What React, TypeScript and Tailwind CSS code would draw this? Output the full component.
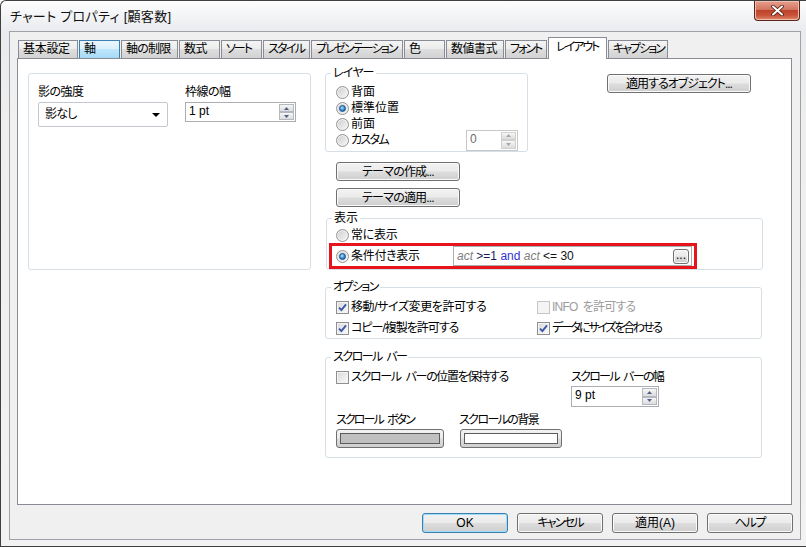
import React from "react";

const font =
  "font-['Liberation_Sans','Noto_Sans_CJK_JP',sans-serif] [font-feature-settings:'palt']";

const btnBg =
  "bg-[linear-gradient(#f2f2f2,#ebebeb_48%,#dddddd_52%,#cfcfcf)]";

// en space keeps the gap visible under tight tracking
const sp = "\u2002";

const tabs = [
  { label: "基本設定", w: "w-[60px]", tr: "tracking-[-0.3px]" },
  { label: "軸", w: "w-[41px]", tr: "", hover: true },
  { label: "軸の制限", w: "w-[57px]", tr: "tracking-[-0.8px]" },
  { label: "数式", w: "w-[41px]", tr: "tracking-[-0.5px]" },
  { label: "ソート", w: "w-[41px]", tr: "tracking-[-2px]" },
  { label: "スタイル", w: "w-[47px]", tr: "tracking-[-1.7px]" },
  { label: "プレゼンテーション", w: "w-[92px]", tr: "tracking-[-1.8px]" },
  { label: "色", w: "w-[41px]", tr: "" },
  { label: "数値書式", w: "w-[58px]", tr: "tracking-[-0.5px]" },
  { label: "フォント", w: "w-[42px]", tr: "tracking-[-2px]" },
  { label: "レイアウト", w: "w-[59px]", tr: "tracking-[-2px]", active: true },
  { label: "キャプション", w: "w-[60px]", tr: "tracking-[-2px]" },
];

function Btn({
  children,
  className = "",
  def = false,
}: {
  children: React.ReactNode;
  className?: string;
  def?: boolean;
}) {
  return (
    <div
      className={`flex items-center justify-center rounded-[3px] border ${
        def
          ? "border-[#3c7fb1] shadow-[inset_0_0_0_1px_#9fdcf8]"
          : "border-[#707070] shadow-[inset_0_0_0_1px_#fafafa]"
      } ${btnBg} text-[12px] leading-none text-black ${className}`}
    >
      {children}
    </div>
  );
}

function Radio({
  checked = false,
  label,
  tc = "",
  h = "h-[15px]",
}: {
  checked?: boolean;
  label: string;
  tc?: string;
  h?: string;
}) {
  return (
    <div className={`flex ${h} items-center gap-[2px]`}>
      <span className="flex h-[13px] w-[13px] items-center justify-center rounded-full border border-[#939393] bg-[linear-gradient(135deg,#cdcdcd,#f8f8f8)] shadow-[inset_0_0_0_1px_#f2f2f2]">
        {checked && (
          <span className="h-[7px] w-[7px] rounded-full border border-[#184d88] bg-[radial-gradient(circle_at_40%_35%,#a8e4ff,#1b74c9_70%)]" />
        )}
      </span>
      <span className={tc}>{label}</span>
    </div>
  );
}

function Check({
  checked = false,
  disabled = false,
  label,
  tc = "",
}: {
  checked?: boolean;
  disabled?: boolean;
  label: string;
  tc?: string;
}) {
  return (
    <div className="flex h-[15px] items-center gap-[2px]">
      <span
        className={`flex h-[13px] w-[13px] items-center justify-center border ${
          disabled
            ? "border-[#c6c6c6] bg-[#f4f4f4]"
            : "border-[#8f8f8f] bg-[linear-gradient(135deg,#d8d8d8,#fbfbfb)] shadow-[inset_0_0_0_1px_#f4f4f4]"
        }`}
      >
        {checked && (
          <svg width="9" height="9" viewBox="0 0 9 9">
            <path d="M1 4.6 L3.4 7 L8 1.4" fill="none" stroke="#3b58a8" strokeWidth="1.9" />
          </svg>
        )}
      </span>
      <span className={`whitespace-pre ${disabled ? "text-[#9c9c9c]" : ""} ${tc}`}>{label}</span>
    </div>
  );
}

function SpinHalf({ up = false, dim = false }: { up?: boolean; dim?: boolean }) {
  return (
    <span
      className={`flex flex-1 items-center justify-center border ${
        dim ? "border-[#d0d0d0]" : "border-[#b4b8c0]"
      } bg-[linear-gradient(#f6f6f6,#dcdcdc)]`}
    >
      <svg width="5" height="3" viewBox="0 0 5 3">
        <path d={up ? "M0 3 L2.5 0 L5 3 Z" : "M0 0 L2.5 3 L5 0 Z"} fill={dim ? "#a8a8a8" : "#4d6185"} />
      </svg>
    </span>
  );
}

function Spin({
  value,
  className = "",
  dim = false,
}: {
  value: string;
  className?: string;
  dim?: boolean;
}) {
  return (
    <div
      className={`flex border bg-white ${
        dim ? "border-[#c8c8c8] text-[#6d6d6d]" : "border-[#abadb3]"
      } ${className}`}
    >
      <span className="flex-1 pl-[3px] pt-[1px] text-[12px] leading-[14px]">{value}</span>
      <div className="flex w-[17px] flex-col p-px">
        <SpinHalf up dim={dim} />
        <SpinHalf dim={dim} />
      </div>
    </div>
  );
}

function Group({
  title,
  tc = "",
  className = "",
  children,
}: {
  title?: string;
  tc?: string;
  className?: string;
  children: React.ReactNode;
}) {
  return (
    <div className={`relative rounded-[3px] border border-[#d5dfe5] ${className}`}>
      {title && (
        <span className={`absolute -top-[8px] left-[5px] whitespace-pre bg-white px-[2px] leading-[14px] ${tc}`}>
          {title}
        </span>
      )}
      {children}
    </div>
  );
}

function ColorBtn({ fill, className = "" }: { fill: string; className?: string }) {
  return (
    <div
      className={`flex h-[19px] rounded-[3px] border border-[#707070] p-[3px] ${btnBg} ${className}`}
    >
      <span className={`flex-1 border border-[#5c5c5c] ${fill}`} />
    </div>
  );
}

export default function App() {
  return (
    <div
      className={`relative h-[547px] w-[806px] overflow-hidden rounded-tl-[6px] border-b border-l border-t border-[#3f3f3f] bg-[linear-gradient(#fdfdfd,#e9ebee_30px,#eeeeee_120px,#f2f2f2)] text-[12px] leading-[15px] text-black ${font}`}
    >
      {/* title bar */}
      <div className="flex h-[30px] items-center pl-[9px] text-[13px] tracking-[0.3px] text-[#111]">
        チャート プロパティ [顧客数]
      </div>
      <div className="absolute right-[6px] top-0 flex h-[20px] w-[46px] items-center justify-center rounded-b-[4px] border border-t-0 border-[#5e2318] bg-[linear-gradient(#e7a08f,#d27560_45%,#bd442b_50%,#c95238_75%,#dc8b70)] shadow-[inset_0_0_0_1px_#eec0b0]">
        <svg width="13" height="11" viewBox="0 0 13 11">
          <path d="M2 1.5 L11 9.5 M11 1.5 L2 9.5" stroke="#4a1810" strokeWidth="3.6" strokeLinecap="round" />
          <path d="M2 1.5 L11 9.5 M11 1.5 L2 9.5" stroke="#ffffff" strokeWidth="2" strokeLinecap="round" />
        </svg>
      </div>

      {/* client frame */}
      <div className="ml-[8px] flex h-[509px] w-[792px] flex-col border border-[#9fa2a8] bg-[#f0f0f0]">
        {/* tab strip */}
        <div className="ml-[7px] mt-[5px] flex h-[21px] items-end gap-[1px] pl-[1px]">
          {tabs.map((t) => (
            <div
              key={t.label}
              className={`${t.w} ${t.tr} overflow-hidden whitespace-nowrap border border-b-0 leading-[17px] ${
                t.active
                  ? "relative z-10 -mb-px h-[22px] border-[#898c95] bg-white pl-[7px] pt-[1px]"
                  : t.hover
                  ? "h-[18px] border-[#3c7fb1] bg-[linear-gradient(#eaf6fd,#d9f0fc_50%,#bee6fd_50%,#a7d9f5)] pl-[4px]"
                  : "h-[18px] border-[#898c95] bg-[linear-gradient(#f4f4f4,#ebebeb_50%,#dedede_50%,#d2d2d2)] pl-[4px]"
              }`}
            >
              {t.label}
            </div>
          ))}
        </div>

        {/* tab pane */}
        <div className="ml-[7px] flex h-[447px] w-[775px] items-start gap-[14px] border border-[#898c95] bg-white pl-[10px] pt-[14px]">
          {/* left */}
          <Group className="flex h-[197px] w-[283px] gap-[17px] pl-[9px] pt-[11px]">
            <div className="flex w-[130px] flex-col">
              <span className="tracking-[-0.5px]">影の強度</span>
              <div className="mt-[2px] flex h-[25px] items-center justify-between rounded-[2px] border border-[#c3c8cf] pl-[6px] pr-[7px]">
                <span className="tracking-[-0.8px]">影なし</span>
                <svg width="8" height="4" viewBox="0 0 8 4">
                  <path d="M0 0 L8 0 L4 4 Z" fill="#000" />
                </svg>
              </div>
            </div>
            <div className="flex w-[111px] flex-col">
              <span className="tracking-[-0.5px]">枠線の幅</span>
              <Spin value="1 pt" className="mt-[2px] h-[20px]" />
            </div>
          </Group>

          {/* right */}
          <div className="flex w-[437px] flex-col">
            <div className="flex items-start">
              <Group
                title="レイヤー"
                tc="tracking-[-0.8px]"
                className="flex w-[203px] flex-col pb-[3px] pl-[10px] pt-[10px]"
              >
                <Radio h="h-[16px]" label="背面" />
                <Radio h="h-[16px]" label="標準位置" checked />
                <Radio h="h-[16px]" label="前面" />
                <div className="flex h-[16px] items-center">
                  <Radio h="h-[16px]" label="カスタム" tc="tracking-[-1.7px]" />
                  <Spin value="0" dim className="ml-auto mr-[9px] h-[21px] w-[52px]" />
                </div>
              </Group>
              <Btn className="ml-[79px] mt-[1px] h-[19px] w-[144px] tracking-[-1px]">
                適用するオブジェクト...
              </Btn>
            </div>

            <Btn className="ml-[11px] mt-[10px] h-[19px] w-[124px] tracking-[-0.8px]">テーマの作成...</Btn>
            <Btn className="ml-[11px] mt-[7px] h-[19px] w-[124px] tracking-[-0.8px]">テーマの適用...</Btn>

            <Group title="表示" className="ml-[1px] mt-[11px] flex w-[437px] flex-col pt-[9px]">
              <div className="pl-[9px]">
                <Radio label="常に表示" tc="tracking-[-0.3px]" />
              </div>
              <div className="ml-[2px] flex h-[26px] w-[368px] items-center border-[3px] border-[#e8141c] pl-[4px] pr-[2px]">
                <Radio label="条件付き表示" checked tc="tracking-[-0.3px]" />
                <div className="ml-auto flex h-[20px] w-[239px] items-center border border-[#abadb3] pl-[3px] pr-[2px] font-['Liberation_Sans',sans-serif]">
                  <span className="italic text-[#808080]">act</span>
                  <span className="whitespace-pre text-[#1a1a5a]"> &gt;=1 </span>
                  <span className="text-[#3434d4]">and</span>
                  <span className="whitespace-pre"> </span>
                  <span className="italic text-[#808080]">act</span>
                  <span className="whitespace-pre text-[#111]"> &lt;= 30</span>
                  <Btn className="ml-auto h-[15px] w-[16px] items-end pb-[2px] text-[9px]">...</Btn>
                </div>
              </div>
            </Group>

            <Group
              title="オプション"
              tc="tracking-[-1.6px]"
              className="mt-[17px] flex w-[437px] flex-col gap-[6px] pb-[2px] pl-[10px] pt-[12px]"
            >
              <div className="flex">
                <div className="w-[201px]">
                  <Check checked label="移動/サイズ変更を許可する" tc="tracking-[-0.4px]" />
                </div>
                <Check disabled label={`INFO${sp}を許可する`} tc="tracking-[-0.8px]" />
              </div>
              <div className="flex">
                <div className="w-[201px]">
                  <Check checked label="コピー/複製を許可する" tc="tracking-[-1px]" />
                </div>
                <Check checked label="データにサイズを合わせる" tc="tracking-[-2.2px]" />
              </div>
            </Group>

            <Group
              title={`スクロール${sp}バー`}
              tc="tracking-[-1.5px]"
              className="mt-[18px] flex w-[437px] flex-col pb-[9px] pl-[10px] pt-[12px]"
            >
              <div className="flex">
                <div className="w-[235px]">
                  <Check label={`スクロール${sp}バーの位置を保持する`} tc="tracking-[-1.3px]" />
                </div>
                <div className="flex flex-col">
                  <span className="whitespace-pre tracking-[-1.7px]">{`スクロール${sp}バーの幅`}</span>
                  <Spin value="9 pt" className="mt-[1px] h-[21px] w-[88px]" />
                </div>
              </div>
              <div className="mt-[6px] flex">
                <div className="flex w-[123px] flex-col">
                  <span className="whitespace-pre tracking-[-1.9px]">{`スクロール${sp}ボタン`}</span>
                  <ColorBtn fill="bg-[#c0c0c0]" className="mt-[1px] w-[108px]" />
                </div>
                <div className="flex flex-col">
                  <span className="tracking-[-1.6px]">スクロールの背景</span>
                  <ColorBtn fill="bg-white" className="ml-[1px] mt-[1px] w-[102px]" />
                </div>
              </div>
            </Group>
          </div>
        </div>

        {/* bottom buttons */}
        <div className="mt-[8px] flex justify-end gap-[9px] pr-[7px]">
          <Btn def className="h-[20px] w-[86px]">OK</Btn>
          <Btn className="h-[20px] w-[86px] tracking-[-1.8px]">キャンセル</Btn>
          <Btn className="h-[20px] w-[86px]">適用(A)</Btn>
          <Btn className="h-[20px] w-[86px] tracking-[-1.3px]">ヘルプ</Btn>
        </div>
      </div>
    </div>
  );
}
